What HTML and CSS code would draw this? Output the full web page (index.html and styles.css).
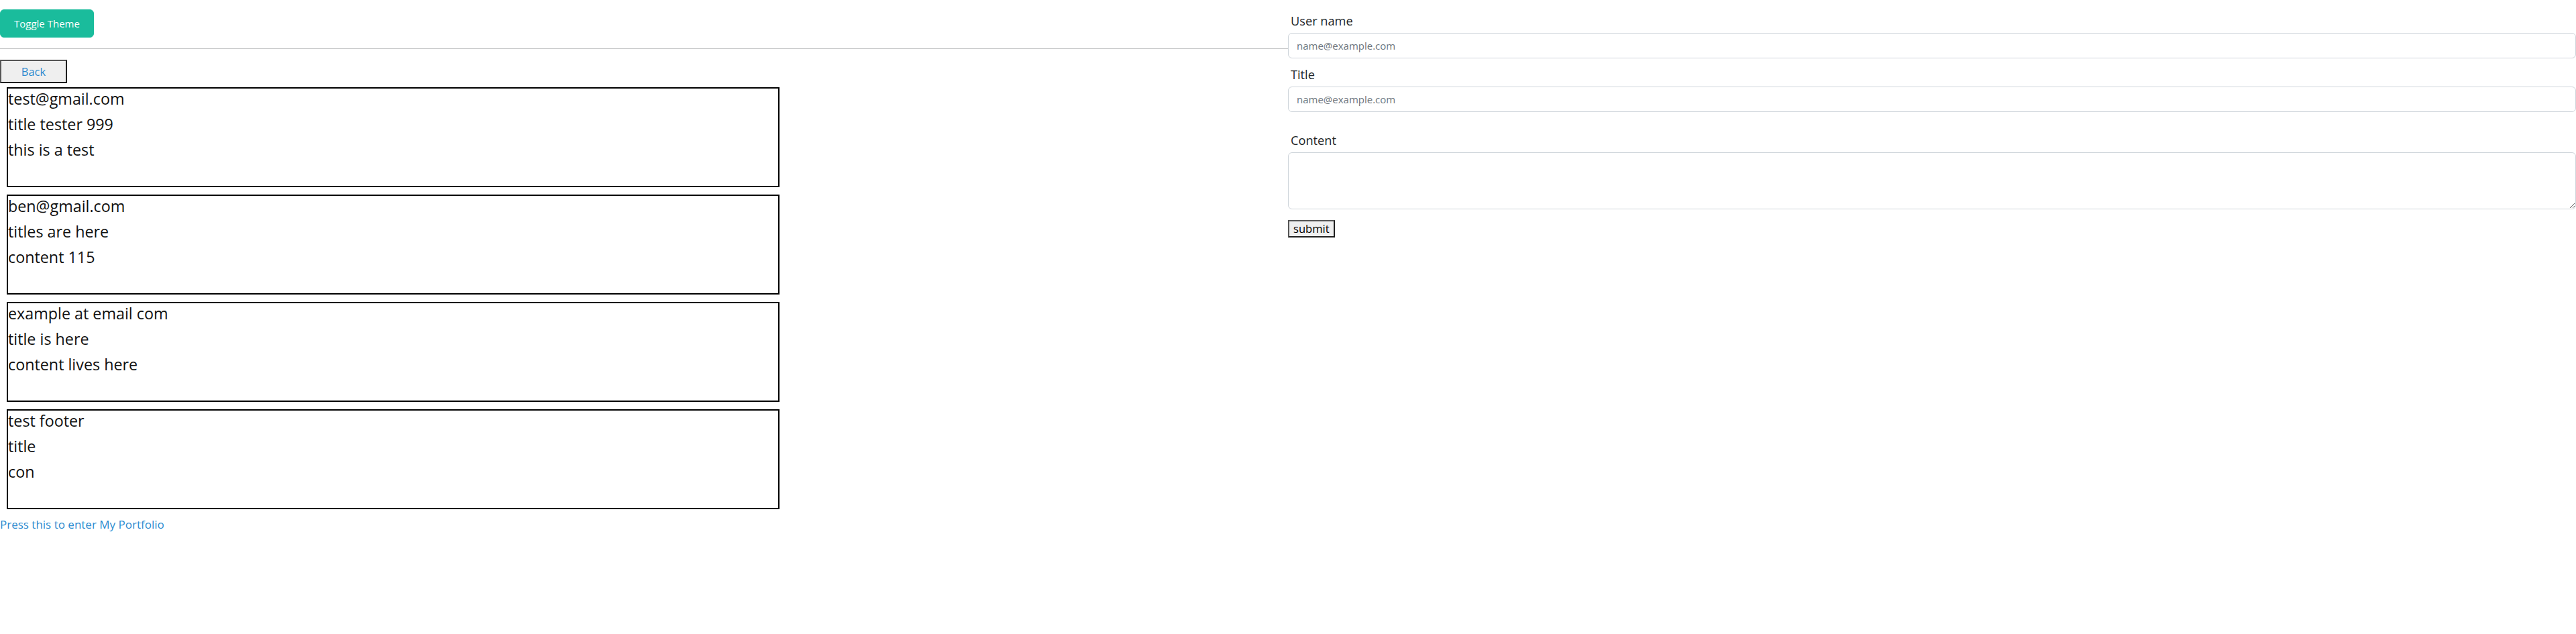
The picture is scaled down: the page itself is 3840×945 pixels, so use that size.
FILE: index.html
```html
<!DOCTYPE html>
<html lang="en">
<head>
<meta charset="utf-8">
<title>Posts</title>
<link rel="stylesheet" href="styles.css">
</head>
<body>
<form class="post-form">
  <div class="field">
    <label class="field-label" for="username">User name</label>
    <input class="field-input" id="username" type="text" placeholder="name@example.com">
  </div>
  <div class="field">
    <label class="field-label" for="title">Title</label>
    <input class="field-input" id="title" type="text" placeholder="name@example.com">
  </div>
  <div class="field field-content">
    <label class="field-label" for="content">Content</label>
    <textarea class="field-textarea" id="content" rows="3"></textarea>
  </div>
  <button class="plain-btn submit-btn" type="button">submit</button>
</form>

<div class="top-bar">
  <button class="theme-toggle" type="button">Toggle Theme</button>
</div>
<hr class="divider">
<button class="plain-btn back-btn" type="button"><a class="link back-link" href="#">Back</a></button>

<div class="posts">
  <div class="card">
    <p class="card-line">test@gmail.com</p>
    <p class="card-line">title tester 999</p>
    <p class="card-line">this is a test</p>
  </div>
  <div class="card">
    <p class="card-line">ben@gmail.com</p>
    <p class="card-line">titles are here</p>
    <p class="card-line">content 115</p>
  </div>
  <div class="card">
    <p class="card-line">example at email com</p>
    <p class="card-line">title is here</p>
    <p class="card-line">content lives here</p>
  </div>
  <div class="card">
    <p class="card-line">test footer</p>
    <p class="card-line">title</p>
    <p class="card-line">con</p>
  </div>
</div>
<div class="footer-link"><a class="link" href="#">Press this to enter My Portfolio</a></div>
</body>
</html>
```
FILE: styles.css
```css
body {
  margin: 0;
  font-family: "Open Sans", "Noto Sans", sans-serif;
  color: #212529;
  background: #ffffff;
}

/* right-hand form, floated over the divider line */
.post-form {
  float: right;
  width: 50%;
  box-sizing: border-box;
  padding-top: 18px;
}

.field-label {
  display: block;
  padding-left: 4px;
  margin-bottom: 4px;
  font-size: 18.2px;
  line-height: 27px;
  color: #212529;
}

.field-input {
  display: block;
  width: 100%;
  height: 38px;
  box-sizing: border-box;
  margin: 0 0 11px;
  padding: 6px 12px;
  font-family: "Open Sans", "Noto Sans", sans-serif;
  font-size: 15px;
  color: #212529;
  background: #ffffff;
  border: 1px solid #ced4da;
  border-radius: 6px;
  outline: none;
}

.field-input::placeholder {
  color: #6c757d;
}

.field-content {
  margin-top: 29px;
}

.field-textarea {
  display: block;
  width: 100%;
  height: 85px;
  box-sizing: border-box;
  margin: 0 0 16px;
  padding: 6px 12px;
  font-family: "Open Sans", "Noto Sans", sans-serif;
  font-size: 15px;
  background: #ffffff;
  border: 1px solid #ced4da;
  border-radius: 6px;
  resize: vertical;
}

/* plain browser-looking buttons */
.plain-btn {
  font-family: "Open Sans", "Noto Sans", sans-serif;
  background: #efefef;
  border: 2px solid;
  border-color: #555555 #1f1f1f #1f1f1f #555555;
  border-radius: 0;
  color: #000000;
  cursor: pointer;
}

.submit-btn {
  display: block;
  padding: 1px 6px;
  font-size: 16.6px;
  line-height: 20px;
}

.back-btn {
  display: block;
  width: 100px;
  height: 35px;
  padding: 0;
  font-size: 16.5px;
}

.link {
  color: #2c8bd0;
  text-decoration: none;
}

/* top bar */
.top-bar {
  display: flex;
  padding-top: 14px;
}

.theme-toggle {
  padding: 9px 20px;
  font-family: "Open Sans", "Noto Sans", sans-serif;
  font-size: 15px;
  line-height: 22px;
  color: #ffffff;
  background: #1abc9c;
  border: 1px solid #1abc9c;
  border-radius: 6px;
}

.divider {
  height: 0;
  margin: 16px 0;
  border: 0;
  border-top: 1px solid #c6c7c8;
}

/* post cards */
.posts {
  padding-top: 6px;
}

.card {
  box-sizing: border-box;
  width: 30%;
  height: 149px;
  margin: 0 0 11px 10px;
  border: 2px solid #000000;
}

.card-line {
  margin: 0 0 8px;
  font-size: 23.3px;
  font-weight: 500;
  line-height: 30px;
  color: #111111;
}

.footer-link {
  font-size: 17px;
  line-height: 24px;
}
```
